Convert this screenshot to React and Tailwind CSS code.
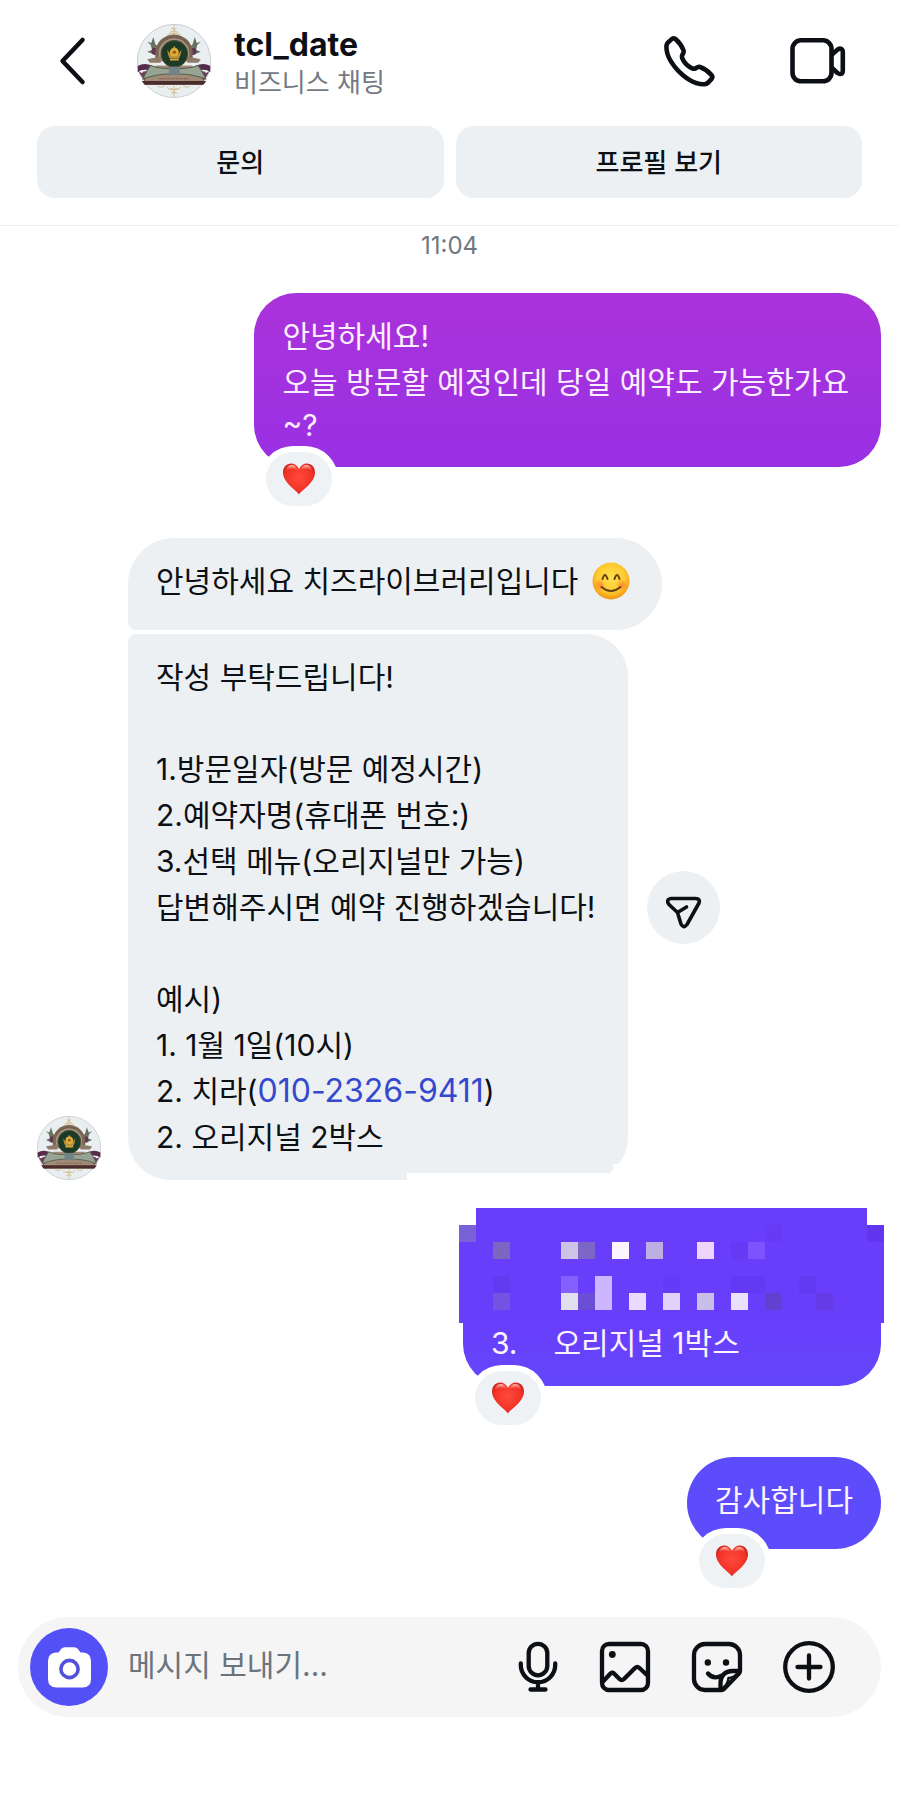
import { useState } from 'react'

const CELL = 17

// [column, row, colour] of the blurred-out squares
const mosaicCells = [
  [0, 1, '#7b61d8'], [24, 1, '#6236ee'], [18, 1, '#673bf6'],
  [2, 2, '#7b67c0'], [6, 2, '#cdc3e6'], [7, 2, '#7c66c6'], [9, 2, '#fcf4ff'],
  [11, 2, '#bdafe2'], [14, 2, '#efd5fb'], [17, 2, '#7d52ff'], [16, 2, '#663af4'],
  [2, 4, '#623aef'], [6, 4, '#8460ff'], [8, 4, '#ceb5ff'], [12, 4, '#653bf5'],
  [16, 4, '#6439f3'], [17, 4, '#6439f3'], [20, 4, '#633af1'],
  [2, 5, '#7452e2'], [6, 5, '#e1dfee'], [7, 5, '#6b4ed6'], [8, 5, '#ceb5ff'],
  [10, 5, '#e8dbff'], [12, 5, '#e2d1fd'], [14, 5, '#c8bfe9'], [16, 5, '#eadffd'],
  [18, 5, '#6240d0'], [21, 5, '#643be6'],
]

function Avatar({ className }) {
  return (
    <svg viewBox="0 0 218 218" className={className} role="img" aria-label="tcl_date">
      <circle cx="109" cy="109" r="108" fill="#e9eef1" stroke="#b4bcc0" strokeWidth="2" />
      {/* gold filigree */}
      <g fill="none" stroke="#cdb57a" strokeWidth="2.5">
        <path d="M109 2v30M101 12q8 8 16 0M98 24q11-8 22 0M90 32q10-10 19-4q9-6 19 4" />
        <path d="M109 182v34M99 190q10 8 20 0M88 186q8 10 18 6M130 186q-8 10-18 6M100 204q9-8 18 0" />
        <path d="M62 184q10 6 20-2M156 184q-10 6-20-2" />
      </g>
      {/* leaves and flowers */}
      <g fill="#66705c">
        <path d="M48 38l6 22 12 12-20-6-16-14 12 4zM30 82l16-6 18 6-14 8z" />
        <path d="M170 38l-6 22-12 12 20-6 16-14-12 4zM188 82l-16-6-18 6 14 8z" />
        <path d="M40 60l14 10 4 14-14-8zM178 60l-14 10-4 14 14-8z" />
      </g>
      <circle cx="54" cy="80" r="11" fill="#5d3850" />
      <circle cx="164" cy="80" r="11" fill="#5d3850" />
      <circle cx="66" cy="92" r="7" fill="#86606a" />
      <circle cx="152" cy="92" r="7" fill="#86606a" />
      {/* arch */}
      <path d="M54 110V84a55 53 0 0 1 110 0v26z" fill="#7a6454" />
      <path d="M64 108V84a45 42 0 0 1 90 0v24z" fill="#a8947e" />
      <path d="M68 62a46 42 0 0 1 82 0" fill="none" stroke="#6b5648" strokeWidth="4" strokeDasharray="4 5" />
      <path d="M30 104l40-8v18H38zM188 104l-40-8v18h32z" fill="#8f7b68" />
      {/* plinth */}
      <path d="M16 146L58 122h102l42 24-8 34H24z" fill="#a08b76" />
      <path d="M14 168h190l-8 11H22z" fill="#4c2b2d" />
      <path d="M66 161h88" stroke="#8b5b58" strokeWidth="4" strokeDasharray="5 3" />
      <circle cx="110" cy="88" r="39" fill="#1b3b28" stroke="#4a4a35" strokeWidth="3" />
      {/* emblem */}
      <path d="M89 76q2 18 8 26h26q6-8 8-26l-8 12H97z" fill="#b9913a" />
      <circle cx="110" cy="83" r="13" fill="#e3ad35" />
      <path d="M110 66v12M97 105h26" stroke="#d5a83c" strokeWidth="5" />
      <circle cx="110" cy="83" r="5" fill="#8a5d1c" />
      {/* ribbon */}
      <path d="M2 124q20-12 44 0l-8 14q-18-8-36 4zM216 124q-20-12-44 0l8 14q18-8 36 4z" fill="#572b4b" />
      <path d="M6 142l30-4-14 30zM212 142l-30-4 14 30z" fill="#6b3d58" />
      <path d="M40 122q34 14 70 7q36 7 70-7l8 12q10 16 14 28q-50-18-92-14q-42-4-92 14q4-12 14-28z" fill="#98a493" stroke="#566052" strokeWidth="3" />
      <path d="M94 126h32v26q-16-5-32 0z" fill="#718386" />
      <circle cx="14" cy="140" r="4" fill="#f3f1f3" />
      <circle cx="204" cy="140" r="4" fill="#f3f1f3" />
    </svg>
  )
}

function HeartReaction() {
  return (
    <button
      type="button"
      aria-label="하트 반응"
      className="absolute -bottom-[39px] left-3 flex h-[54px] w-[66px] items-center justify-center rounded-full bg-[#eef2f4] ring-6 ring-white"
    >
      <svg viewBox="0 0 32 32" className="h-8 w-8">
        <defs>
          <radialGradient id="heart" cx="50%" cy="45%" r="60%">
            <stop offset="0" stopColor="#ff4a3d" />
            <stop offset="0.7" stopColor="#f23327" />
            <stop offset="1" stopColor="#b9211b" />
          </radialGradient>
          <linearGradient id="shine" x1="0" y1="0" x2="0" y2="1">
            <stop offset="0" stopColor="#ffc9bd" />
            <stop offset="1" stopColor="#ff5a4a" stopOpacity="0" />
          </linearGradient>
        </defs>
        <path
          d="M16 31.5C14.5 28 0 20 0 9.500C0 4 3.500 0.500 8 0.500C11.500 0.500 14.500 2.500 16 6C17.500 2.500 20.500 0.500 24 0.500C28.500 0.500 32 4 32 9.500C32 20 17.500 28 16 31.500Z"
          fill="url(#heart)"
        />
        <path d="M2.500 8Q4 2 8.500 2T14.500 7Q8 3.500 2.500 8ZM17.500 7Q19 2 23.500 2T29.500 8Q24 3.500 17.500 7Z" fill="url(#shine)" />
      </svg>
    </button>
  )
}

function SmileEmoji() {
  return (
    <svg viewBox="0 0 38 38" className="h-[38px] w-[38px]" role="img" aria-label="😊">
      <defs>
        <radialGradient id="face" cx="50%" cy="42%" r="58%">
          <stop offset="0" stopColor="#ffe04d" />
          <stop offset="0.65" stopColor="#ffcb30" />
          <stop offset="1" stopColor="#f29416" />
        </radialGradient>
        <radialGradient id="blush">
          <stop offset="0" stopColor="#ff6a2e" stopOpacity="0.7" />
          <stop offset="1" stopColor="#ff6a2e" stopOpacity="0" />
        </radialGradient>
      </defs>
      <circle cx="19" cy="19" r="18.500" fill="url(#face)" />
      <circle cx="8" cy="23" r="6" fill="url(#blush)" />
      <circle cx="30" cy="23" r="6" fill="url(#blush)" />
      <g fill="none" stroke="#6a4011" strokeWidth="2" strokeLinecap="round">
        <path d="M10.500 17q2.500-8 5 0M22.500 17q2.500-8 5 0" />
        <path d="M9.500 25q9.500 8 19 0" />
      </g>
    </svg>
  )
}

function Mosaic() {
  return (
    <svg viewBox="0 0 425 115" className="-ml-1 block h-[115px] w-[425px] max-w-none" aria-hidden="true" shapeRendering="crispEdges">
      <path d="M17 0H408V17H425V115H0V17H17Z" fill="#693efb" />
      {mosaicCells.map(([col, row, fill]) => (
        <rect key={`${col}-${row}`} x={col * CELL} y={row * CELL} width={CELL} height={CELL} fill={fill} />
      ))}
    </svg>
  )
}

function Header() {
  return (
    <header className="border-b border-[#eceef0] px-[37px] pt-6 pb-[27px]">
      <div className="flex h-[74px] items-center">
        <button type="button" aria-label="뒤로" className="ml-5">
          <svg viewBox="0 0 32 52" className="h-[52px] w-8" fill="none" stroke="currentColor" strokeWidth="4.500" strokeLinecap="round" strokeLinejoin="round">
            <path d="M25.500 5L5.500 26L25.500 47" />
          </svg>
        </button>
        <Avatar className="ml-12 h-[74px] w-[74px]" />
        <div className="mt-1 ml-[23px] flex-1">
          <h1 className="text-[32px] leading-10 font-bold">tcl_date</h1>
          <p className="text-[26px] leading-9 text-[#737a84]">비즈니스 채팅</p>
        </div>
        <button type="button" aria-label="음성 통화">
          <svg viewBox="0 0 24 24" className="h-[55px] w-[55px]" fill="currentColor">
            <path d="M18.227 22.912c-4.913 0-9.286-3.627-11.486-5.828C4.486 14.83.731 10.291.921 5.231a3.289 3.289 0 0 1 .908-2.138 17.116 17.116 0 0 1 1.865-1.71 2.307 2.307 0 0 1 3.004.174 13.283 13.283 0 0 1 3.658 5.325 2.551 2.551 0 0 1-.19 1.941l-.455.853a.463.463 0 0 0-.024.387 7.57 7.57 0 0 0 4.077 4.075.455.455 0 0 0 .386-.024l.853-.455a2.548 2.548 0 0 1 1.94-.19 13.278 13.278 0 0 1 5.326 3.658 2.309 2.309 0 0 1 .174 3.003 17.319 17.319 0 0 1-1.71 1.866 3.29 3.29 0 0 1-2.138.91 10.27 10.27 0 0 1-.368.006Zm-13.144-20a.27.27 0 0 0-.167.054A15.121 15.121 0 0 0 3.28 4.47a1.289 1.289 0 0 0-.36.836c-.161 4.301 3.21 8.34 5.235 10.364s6.06 5.403 10.366 5.236a1.284 1.284 0 0 0 .835-.36 15.217 15.217 0 0 0 1.504-1.637.324.324 0 0 0-.047-.41 11.62 11.62 0 0 0-4.457-3.119.545.545 0 0 0-.411.044l-.854.455a2.452 2.452 0 0 1-2.071.116 9.571 9.571 0 0 1-5.189-5.188 2.457 2.457 0 0 1 .115-2.071l.456-.855a.544.544 0 0 0 .043-.41 11.629 11.629 0 0 0-3.118-4.458.36.36 0 0 0-.244-.1Z" />
          </svg>
        </button>
        <button type="button" aria-label="영상 통화" className="mr-4 ml-[73px]">
          <svg viewBox="0 0 56 48" className="h-12 w-14" fill="none" stroke="currentColor" strokeWidth="4.600" strokeLinejoin="round">
            <rect x="2.500" y="3.300" width="39" height="41" rx="8.500" />
            <path d="M41.500 18L47.500 12.600Q49.500 11 51.500 12Q52.800 12.600 52.800 15V33.500Q52.800 36 51.500 36.700Q49.500 37.500 47.500 36L41.500 30.500" />
          </svg>
        </button>
      </div>
      <div className="mt-7 grid grid-cols-2 gap-3">
        <button type="button" className="h-[72px] rounded-[18px] bg-[#ecf0f3] text-[26px] font-medium">문의</button>
        <button type="button" className="h-[72px] rounded-[18px] bg-[#ecf0f3] text-[26px] font-medium">프로필 보기</button>
      </div>
    </header>
  )
}

function Composer() {
  const [text, setText] = useState('')

  return (
    <form
      onSubmit={(e) => e.preventDefault()}
      className="mx-[18px] mt-[68px] flex h-[100px] items-center rounded-full bg-[#f5f5f5] pr-[46px] pl-3"
    >
      <button type="button" aria-label="카메라" className="flex h-[78px] w-[78px] shrink-0 items-center justify-center rounded-full bg-[#5350f8]">
        <svg viewBox="0 0 43 41" className="h-[41px] w-[43px]">
          <path d="M8 5.500H10.500L13 2Q14.500 0.300 17 0.300H26Q28.500 0.300 30 2L32.500 5.500H35Q43 6 43 14V32Q43 40.500 34.500 40.500H8.500Q0 40.500 0 32V14Q0 6 8 5.500Z" fill="#fff" />
          <circle cx="21.500" cy="22" r="8.600" fill="none" stroke="#5350d8" strokeWidth="3.600" />
        </svg>
      </button>
      <input
        type="text"
        aria-label="메시지"
        value={text}
        onChange={(e) => setText(e.target.value)}
        placeholder="메시지 보내기..."
        className="ml-5 h-16 min-w-0 flex-1 bg-transparent pb-1 text-[30px] outline-none placeholder:text-[#6b747d]"
      />
      <div className="flex items-center gap-10">
        <button type="button" aria-label="음성 메시지">
          <svg viewBox="0 0 42 52" className="h-[52px] w-[42px]" fill="none" stroke="currentColor" strokeWidth="4.300" strokeLinecap="round">
            <rect x="11.700" y="2.800" width="18.600" height="31.500" rx="9.300" />
            <path d="M3.800 22.500V24a17.200 17.200 0 0 0 34.400 0V22.500M21 41.500V48M13.500 48.500H28.500" />
          </svg>
        </button>
        <button type="button" aria-label="사진">
          <svg viewBox="0 0 52 52" className="h-[52px] w-[52px]" fill="none" stroke="currentColor" strokeWidth="4.300" strokeLinecap="round" strokeLinejoin="round">
            <rect x="3" y="3" width="46" height="46" rx="7" />
            <path d="M4 40.500L11.500 32.500Q13.200 31 15 32.500L20.500 38Q22.700 40 25 38L36 27Q38.300 25 40.500 27L48.500 34.500" />
            <circle cx="13.300" cy="13.500" r="3.400" fill="currentColor" stroke="none" />
          </svg>
        </button>
        <button type="button" aria-label="스티커">
          <svg viewBox="0 0 52 52" className="h-[52px] w-[52px]" fill="none" stroke="currentColor" strokeWidth="4.300" strokeLinecap="round" strokeLinejoin="round">
            <path d="M30.500 49H14A11 11 0 0 1 3 38V14A11 11 0 0 1 14 3H38A11 11 0 0 1 49 14V30Q49 31.500 48 32.500L33 48Q32 49 30.500 49Z" />
            <path d="M29.500 48.500V43Q29.500 30 42 30H48.500M17 32.500Q22.500 39 31 34.500" />
            <path d="M30.500 47.500Q37 44 37.500 37Q43 37 47.500 31" strokeWidth="2.500" />
            <circle cx="16.800" cy="21.500" r="3.200" fill="currentColor" stroke="none" />
            <circle cx="35" cy="21.500" r="3.200" fill="currentColor" stroke="none" />
          </svg>
        </button>
        <button type="button" aria-label="더 보기">
          <svg viewBox="0 0 52 52" className="h-[52px] w-[52px]" fill="none" stroke="currentColor" strokeWidth="4.300" strokeLinecap="round">
            <circle cx="26" cy="26" r="23.800" />
            <path d="M26 14.500V37.500M14.500 26H37.500" />
          </svg>
        </button>
      </div>
    </form>
  )
}

export default function App() {
  return (
    <div className="min-h-screen bg-white pb-24 font-['Inter','Noto_Sans_CJK_KR',sans-serif] text-[#0c1014]">
      <Header />
      <time className="block text-center text-[24px] leading-10 text-[#6f7780]">11:04</time>

      <main className="flex flex-col pr-[18px] pl-[37px] text-[30px] leading-[46px]">
        <div className="relative mt-[27px] self-end rounded-[42px] bg-linear-to-b from-[#aa32da] to-[#9930e4] pt-5 pr-8 pb-[22px] pl-7 text-[#fdeeff]">
          <p>안녕하세요!</p>
          <p>오늘 방문할 예정인데 당일 예약도 가능한가요</p>
          <p className="leading-10">~?</p>
          <HeartReaction />
        </div>

        {/* Received messages */}
        <div className="mt-[71px] flex items-end gap-[27px]">
          <Avatar className="h-16 w-16 shrink-0" />
          <div className="flex flex-col items-start gap-1">
            <div className="flex items-center gap-[14px] rounded-[46px] rounded-bl-lg bg-[#ecf0f3] pt-5 pr-8 pb-[26px] pl-7">
              <p>안녕하세요 치즈라이브러리입니다</p>
              <SmileEmoji />
            </div>
            <div className="flex items-center gap-[19px]">
              <div className="relative rounded-[42px] rounded-tl-lg bg-[#ecf0f3] py-5 pr-8 pl-7">
                <p>작성 부탁드립니다!</p>
                <br />
                <p>1.방문일자(방문 예정시간)</p>
                <p>2.예약자명(휴대폰 번호:)</p>
                <p>3.선택 메뉴(오리지널만 가능)</p>
                <p>답변해주시면 예약 진행하겠습니다!</p>
                <br />
                <p>예시)</p>
                <p>1. 1월 1일(10시)</p>
                <p>2. 치라(<a href="tel:010-2326-9411" className="text-[32px] text-[#3549cf]">010-2326-9411</a>)</p>
                <p>2. 오리지널 2박스</p>
                {/* clipped bottom edge */}
                <span className="absolute right-0 bottom-0 h-[7px] w-[221px] bg-white" />
                <span className="absolute right-0 bottom-0 h-4 w-[15px] bg-white" />
              </div>
              <button type="button" aria-label="전달" className="h-[73px] w-[73px] shrink-0 rounded-full bg-[#ecf0f3]">
                <svg viewBox="0 0 73 73" className="h-[73px] w-[73px]" fill="none" stroke="currentColor" strokeWidth="3.600" strokeLinecap="round" strokeLinejoin="round">
                  <path d="M24 27.500H48.500Q53.500 27.500 52 32L40 53.500Q36.500 58 34 53L30.500 41.500L22 33.500Q18.500 28.500 24 27.500ZM30.500 41.500L39.500 36" />
                </svg>
              </button>
            </div>
          </div>
        </div>

        <div className="relative mt-7 w-[418px] self-end text-[#fdf3ff]">
          <Mosaic />
          <div className="flex gap-9 rounded-b-[42px] bg-linear-to-b from-[#683ffb] to-[#6346fb] px-7 pb-[23px] leading-10">
            <span>3.</span>
            <span>오리지널 1박스</span>
          </div>
          <HeartReaction />
        </div>

        <div className="relative mt-[71px] self-end rounded-full bg-[#5c4cfb] px-7 pt-5 pb-[26px] text-[#fdf3ff]">
          <p>감사합니다</p>
          <HeartReaction />
        </div>
      </main>

      <Composer />
    </div>
  )
}
